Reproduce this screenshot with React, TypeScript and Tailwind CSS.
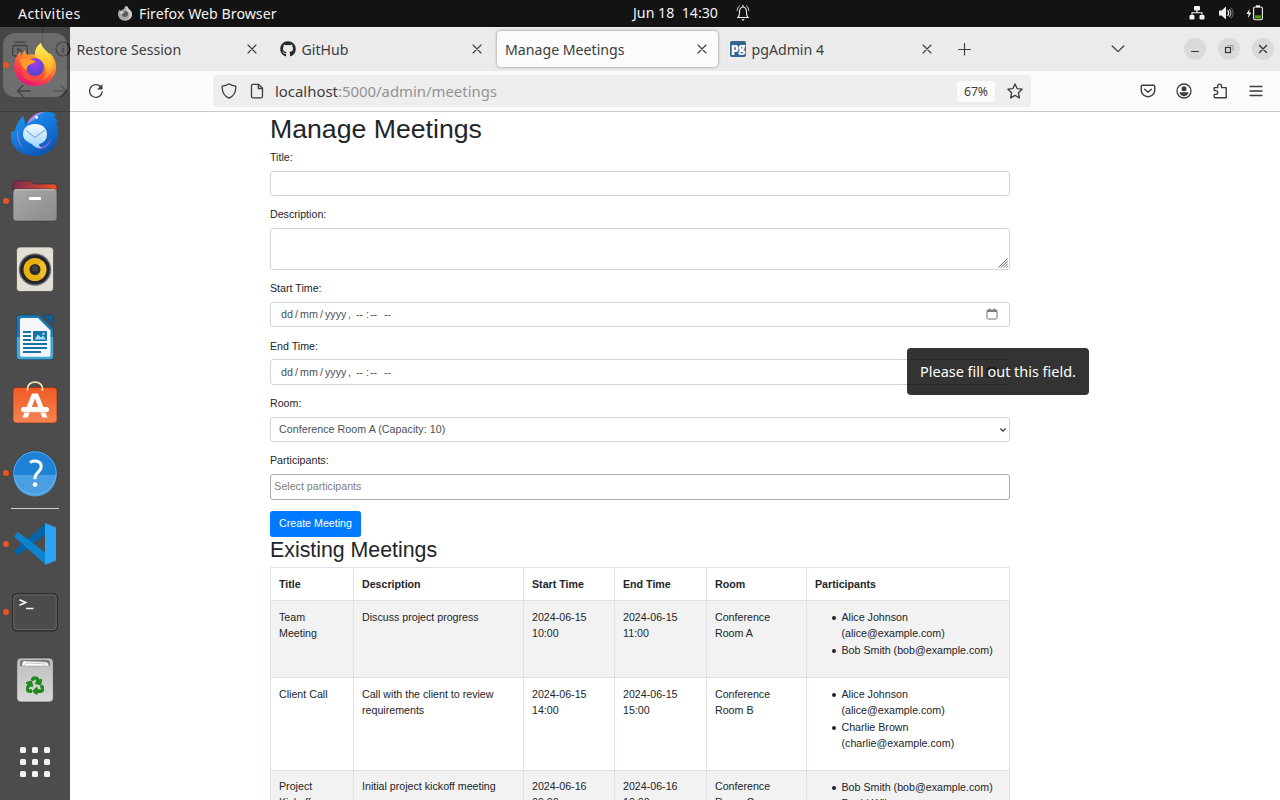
import React from "react";
import { FaGithub, FaRecycle } from "react-icons/fa";

const ui = "font-['Noto_Sans',sans-serif]";

/* ---------- small line icons ---------- */

function Line({ d, size = 16, className = "", w = 1.3, fill = "none" }: { d: string; size?: number; className?: string; w?: number; fill?: string }) {
  return (
    <svg viewBox="0 0 16 16" width={size} height={size} fill={fill} stroke="currentColor" strokeWidth={w} strokeLinecap="round" strokeLinejoin="round" className={`block shrink-0 ${className}`}>
      <path d={d} />
    </svg>
  );
}

const CloseX = () => <Line size={16} w={1.1} d="M4 4l8 8M12 4l-8 8" />;

function Bell() {
  return (
    <svg viewBox="0 0 16 18" width="16" height="18" fill="none" stroke="#f2f2f2" strokeWidth="1.1" className="block">
      <path d="M3 13.5c1.2-1.3 1.5-2.5 1.5-5C4.500 5 5.700 3 8 3s3.500 2 3.500 5.500c0 2.500.3 3.700 1.500 5z" strokeLinejoin="round" />
      <path d="M2.500 13.500h11M8 1.300v1.500" strokeLinecap="round" />
      <path d="M6.300 15.300h3.400L8 17z" fill="#f2f2f2" stroke="none" />
      <path d="M4.500 1.800C3 3 2.300 4.500 2.200 6.500M11.500 1.800c1.500 1.200 2.200 2.700 2.300 4.700" strokeLinecap="round" strokeWidth=".9" />
    </svg>
  );
}

function Network() {
  return (
    <svg viewBox="0 0 16 14" width="16" height="14" fill="#f2f2f2" className="mb-px block">
      <rect x="5" y="0" width="6" height="4.500" rx="1" />
      <rect x="0.500" y="9" width="5" height="4.500" rx="1" />
      <rect x="10.500" y="9" width="5" height="4.500" rx="1" />
      <path d="M8 4v2.800M3 9V6.800h10V9" fill="none" stroke="#f2f2f2" strokeWidth="1.100" />
    </svg>
  );
}

function Volume() {
  return (
    <svg viewBox="0 0 16 16" width="16" height="16" fill="none" strokeLinecap="round" className="mb-px ml-px block">
      <path d="M1 5.500h2.600L8 1.500v13l-4.400-4H1z" fill="#f2f2f2" />
      <path d="M9.800 5.500c1 1.500 1 3.500 0 5" stroke="#f2f2f2" strokeWidth="1.200" />
      <path d="M11.600 4.300c1.600 2.300 1.600 5.100 0 7.400" stroke="#a8a8a8" strokeWidth="1.200" />
      <path d="M13.300 3c2.300 3 2.300 7 0 10" stroke="#6c6c6c" strokeWidth="1" />
    </svg>
  );
}

function Battery() {
  return (
    <svg viewBox="0 0 18 16" width="18" height="16" className="mb-[2px] mr-px block">
      <path d="M3.600 4L.4 9h2.200L2 13l3.300-5.400H3.200z" fill="#f2f2f2" />
      <rect x="10" y="0.300" width="4" height="2" fill="#f2f2f2" />
      <rect x="7.600" y="2" width="8.800" height="12.800" rx="1.500" fill="none" stroke="#f2f2f2" strokeWidth="1.100" />
      <rect x="9" y="10.300" width="6" height="3.200" fill="#4e9a06" />
    </svg>
  );
}

function GreyFox() {
  return (
    <svg viewBox="0 0 48 48" width="16" height="16" className="mb-[2px] block">
      <path d="M25 3c5 2 6 6 9 9 7 3 11 9 11 16 0 11-9 19-21 19S3 38 3 27c0-6 2-9 5-13 1 2 2 3 5 3 2-3 5-4 8-4 1-4 2-7 4-10z" fill="#a9a9a9" />
      <path d="M28 3c5 2 6 6 8 10 6 3 9 9 9 15 0 11-9 19-21 19 10-3 15-9 14-20-2-5-8-6-10-12-1-5-1-8 0-12z" fill="#cfcfcf" />
      <circle cx="24" cy="27" r="9" fill="#5b5b5b" />
      <path d="M8 20c6-3 10 0 16 1-3 3-7 2-8 6-4 0-8-3-8-7z" fill="#d0d0d0" />
    </svg>
  );
}

/* ---------- top bar ---------- */

function TopBar() {
  return (
    <header className="relative flex h-[27px] shrink-0 items-center bg-[#131313] text-[14.200px] leading-none text-[#f2f2f2]">
      <span className="ml-[18px] w-[99px] pt-[2px] tracking-[0.350px]">Activities</span>
      <GreyFox />
      <span className="ml-[6px] whitespace-nowrap pt-[2px] tracking-[0.020px]">Firefox Web Browser</span>
      <div className="absolute left-[633px] top-0 flex h-[26px] items-center">
        <span className="w-[102px] whitespace-pre pt-px">{"Jun 18  14:30"}</span>
        <Bell />
      </div>
      <div className="ml-auto mr-[15px] flex items-center gap-[12px]">
        <Network />
        <Volume />
        <Battery />
      </div>
    </header>
  );
}

/* ---------- browser chrome ---------- */

function Tab({ icon, label, active = false }: { icon?: React.ReactNode; label: string; active?: boolean }) {
  return (
    <div className={`mx-[2px] flex h-[36px] w-[221px] shrink-0 items-center rounded-[4px] pl-[8px] pr-[8px] text-[#3d3d3d] ${active ? "bg-[#fbfbfb] shadow-[0_0_3px_rgba(0,0,0,0.45)]" : ""}`}>
      {icon && <span className="mr-[5.500px] flex size-4 items-center">{icon}</span>}
      <span className="flex-1 whitespace-nowrap pt-[3px] text-[14.150px] leading-none">{label}</span>
      <CloseX />
    </div>
  );
}

function WindowButton({ children }: { children: React.ReactNode }) {
  return <span className="flex size-[22px] items-center justify-center rounded-full bg-[#dadada] text-[#333]">{children}</span>;
}

function TabStrip() {
  return (
    <div className="flex h-[44px] shrink-0 items-center bg-[#ebebeb] text-[#3d3d3d]">
      <div className="flex h-full w-[43px] items-center border-r border-[#b5b5b5] pl-[12px]">
        <svg viewBox="0 0 16 16" width="16" height="16" fill="none" stroke="currentColor" strokeWidth="1.300" strokeLinejoin="round">
          <rect x="0.700" y="4.500" width="14.600" height="10.500" rx="2" />
          <path d="M2.500 1.200h11M6 7.500v4.500l4-2.200z" />
        </svg>
      </div>
      <div className="ml-[2px] flex">
        <Tab
          label="Restore Session"
          icon={
            <svg viewBox="0 0 16 16" width="16" height="16" fill="none" stroke="currentColor" strokeWidth="1.200">
              <circle cx="8" cy="8" r="7" />
              <path d="M8 7v5M8 4v1.600" />
            </svg>
          }
        />
        <Tab label="GitHub" icon={<FaGithub className="size-4 text-[#24292f]" />} />
        <Tab label="Manage Meetings" active />
        <Tab
          label="pgAdmin 4"
          icon={<span className="flex size-4 items-center justify-center rounded-[2px] bg-[#326690] pb-[3px] font-['Open_Sans',sans-serif] text-[12px] font-extrabold leading-none tracking-[-0.600px] text-white">pg</span>}
        />
      </div>
      <Line className="ml-[12px]" w={1.2} d="M7.500 2.500v11.500M1.700 8.500h11.600" />
      <Line className="ml-auto" w={1.300} d="M2.200 5l5.800 5.600L13.800 5" />
      <div className="ml-[58px] mr-[6px] flex gap-[12px]">
        <WindowButton>
          <Line size={16} w={1.1} d="M4.500 10.500h7" />
        </WindowButton>
        <WindowButton>
          <svg viewBox="0 0 16 16" width="16" height="16" fill="none" className="block">
            <path d="M6.500 4.500h5.500v5.500" stroke="#999" />
            <rect x="4.500" y="6.500" width="5" height="5" stroke="#333" strokeWidth="1.200" />
          </svg>
        </WindowButton>
        <WindowButton>
          <Line size={16} w={1.400} d="M4.500 4.500l7 7M11.500 4.500l-7 7" />
        </WindowButton>
      </div>
    </div>
  );
}

function Toolbar() {
  return (
    <div className="flex h-[41px] shrink-0 items-center border-b border-[#c9c9c9] bg-[#fbfbfb] text-[#3d3d3d]">
      <Line className="ml-[16px]" d="M1.500 8h13M7 2.500L1.500 8 7 13.500" />
      <Line className="ml-[20px] opacity-50" d="M1.500 8h13M9 2.500L14.500 8 9 13.500" />
      <svg viewBox="0 0 16 16" width="16" height="16" fill="none" stroke="currentColor" strokeWidth="1.300" className="ml-[20px] block">
        <path d="M12.700 3.700A6.400 6.400 0 1 0 14.300 8.600" strokeLinecap="round" />
        <path d="M14.500 1v5.500H9z" fill="currentColor" stroke="none" />
      </svg>
      <div className="ml-[109px] flex h-[32px] w-[818px] items-center rounded-[4px] bg-[#eee] pl-[8px] pr-[8px]">
        <Line d="M8 .8c1.800 1.400 4 2.200 6.800 2.300.3 5-1.800 9.800-6.800 12.100C3 12.900.9 8.100 1.200 3.100 4 3 6.200 2.200 8 .8z" />
        <Line className="ml-[12px]" d="M2.500 2.800c0-.9.500-1.500 1.400-1.500H9.500l4 4v8c0 .9-.5 1.500-1.400 1.500H3.900c-.9 0-1.400-.6-1.400-1.500zM9.300 1.500v4h4" />
        <span className="ml-[10px] flex-1 whitespace-nowrap pt-px text-[14.900px] leading-none text-[#939393]">
          <span className="text-[#3d3d3d]">localhost</span>:5000/admin/meetings
        </span>
        <span className="mr-[12px] flex h-[21px] w-[38px] items-center justify-center rounded-[3px] bg-[#fbfbfb] pt-[2px] text-[12.300px] leading-none tracking-[-0.100px]">67%</span>
        <Line d="M8 .9l2.100 4.700 5 .6-3.700 3.500 1 5.200L8 12.400l-4.400 2.500 1-5.200L.9 6.200l5-.6z" />
      </div>
      <Line className="ml-[109px]" w={1.400} d="M2.800 2.300h10.400c.9 0 1.600.6 1.600 1.500v3.300c0 3.900-3 6.600-6.800 6.600S1.200 11 1.200 7.100V3.800c0-.9.700-1.500 1.600-1.500zM4.700 6.300L8 9.300l3.300-3" />
      <svg viewBox="0 0 16 16" width="16" height="16" className="ml-[20px] block" fill="currentColor">
        <circle cx="8" cy="8" r="7" fill="none" stroke="currentColor" strokeWidth="1.300" />
        <circle cx="8" cy="5.800" r="2.500" />
        <path d="M3.600 9.300h8.800c0 2.300-2 3.900-4.400 3.900S3.600 11.600 3.600 9.300z" />
      </svg>
      <Line className="ml-[20px]" w={1.400} d="M2.200 4.600h3.500V3a1.900 1.900 0 0 1 3.800 0v1.600h4.700v10.200H3.100c-.5 0-.9-.3-.9-.8v-2.600h1.600a1.900 1.900 0 0 0 0-3.800H2.200z" />
      <Line className="ml-[20px]" w={1.300} d="M2 3.500h12M2 8h12M2 12.500h12" />
    </div>
  );
}

/* ---------- page ---------- */

const field = "w-full rounded-[3px] border border-[#ced4da] bg-white text-[#495057]";

function Group({ label, className = "mb-[10px] gap-[6px]", children }: { label: string; className?: string; children: React.ReactNode }) {
  return (
    <div className={`flex flex-col ${className}`}>
      <label className="block leading-4">{label}</label>
      {children}
    </div>
  );
}

function DateTime({ className }: { className: string }) {
  return (
    <div className={`${field} flex items-center pl-[10px] pr-[11px] ${className}`}>
      <span className="w-[14px]">dd</span>
      <span className="w-[5px]">/</span>
      <span className="w-[20px]">mm</span>
      <span className="w-[5px]">/</span>
      <span className="w-[23px]">yyyy</span>
      <span className="w-[8px]">,</span>
      <span className="w-[9px]">--</span>
      <span className="w-[5px] text-center">:</span>
      <span className="w-[14px]">--</span>
      <span>--</span>
      <svg viewBox="0 0 12 12" width="12" height="12" className="ml-auto block" fill="none" stroke="#6c757d">
        <rect x="1" y="2" width="10" height="9" rx="1.300" />
        <path d="M1 3h10" strokeWidth="1.800" />
        <path d="M3.500.3V2M8.500.3V2" />
      </svg>
    </div>
  );
}

const rows = [
  { title: "Team Meeting", desc: "Discuss project progress", start: "2024-06-15 10:00", end: "2024-06-15 11:00", room: "Conference Room A", people: ["Alice Johnson (alice@example.com)", "Bob Smith (bob@example.com)"], row: "h-[77px] bg-[#f2f2f2]", pad: "pt-[8px]", list: "", item: "pb-[0.670px]" },
  { title: "Client Call", desc: "Call with the client to review requirements", start: "2024-06-15 14:00", end: "2024-06-15 15:00", room: "Conference Room B", people: ["Alice Johnson (alice@example.com)", "Charlie Brown (charlie@example.com)"], row: "h-[93px]", pad: "pt-[8px]", list: "", item: "pb-[0.670px]" },
  { title: "Project Kickoff", desc: "Initial project kickoff meeting", start: "2024-06-16 09:00", end: "2024-06-16 10:00", room: "Conference Room C", people: ["Bob Smith (bob@example.com)", "David Wilson (david@example.com)"], row: "h-[93px] bg-[#f2f2f2]", pad: "pt-[7px]", list: "pt-px", item: "" },
];

const cell = "border border-[#dee2e6] px-[8px] pb-[8px] text-left align-top";

function Page() {
  return (
    <main className="mx-auto w-[740px] shrink-0 font-['Liberation_Sans',Arial,sans-serif] text-[10.667px] leading-4 text-[#212529]">
      <h1 className="mb-[3px] text-[26.667px] leading-[34px]">Manage Meetings</h1>
      <Group label="Title:">
        <div className={`${field} h-[25px]`} />
      </Group>
      <Group label="Description:">
        <div className={`${field} flex h-[42px] items-end justify-end`}>
          <svg viewBox="0 0 10 10" width="10" height="10" className="mb-px mr-px block" stroke="#444" strokeWidth=".8">
            <path d="M.3 9.700l9.400-9.400M3 9.700L9.700 3M5.700 9.700l4-4M8.300 9.700l1.400-1.400" />
          </svg>
        </div>
      </Group>
      <Group label="Start Time:" className="mb-[11px] gap-[6px]">
        <DateTime className="h-[25px] pb-px" />
      </Group>
      <Group label="End Time:" className="mb-[10px] gap-[5px]">
        <DateTime className="h-[26px]" />
      </Group>
      <Group label="Room:">
        <div className={`${field} flex h-[25px] items-center justify-between pl-[8px] pr-[3px]`}>
          <span className="pb-[2px] tracking-[0.050px]">Conference Room A (Capacity: 10)</span>
          <svg viewBox="0 0 6 4" width="6" height="4" fill="none" stroke="#333" strokeWidth="1.100">
            <path d="M.4.500L3 3.200 5.600.500" />
          </svg>
        </div>
      </Group>
      <Group label="Participants:" className="mb-[11px] gap-[6px]">
        <div className="flex h-[26px] w-full items-center rounded-[3px] border border-[#aaa] bg-white pb-[2px] pl-[3.300px] text-[#7e7e7e]">Select participants</div>
      </Group>
      <div className="flex">
        <button className="h-[26px] w-[91px] rounded-[2.700px] bg-[#007bff] pb-[2px] text-center leading-4 text-white">Create Meeting</button>
      </div>
      <h2 className="mb-[3px] text-[21.333px] leading-[27px]">Existing Meetings</h2>
      <table className="w-[740px] table-fixed border-collapse">
        <colgroup>
          <col className="w-[83px]" />
          <col className="w-[170px]" />
          <col className="w-[91px]" />
          <col className="w-[92px]" />
          <col className="w-[100px]" />
          <col className="w-[203px]" />
        </colgroup>
        <thead>
          <tr className="h-[33px]">
            {["Title", "Description", "Start Time", "End Time", "Room", "Participants"].map((h) => (
              <th key={h} className={`${cell} pt-[8px] font-bold`}>{h}</th>
            ))}
          </tr>
        </thead>
        <tbody>
          {rows.map((r) => (
            <tr key={r.title} className={r.row}>
              {[r.title, r.desc, r.start, r.end, r.room].map((text, i) => (
                <td key={i} className={`${cell} ${r.pad}`}>{text}</td>
              ))}
              <td className={`${cell} ${r.pad}`}>
                <ul className={`pl-[16px] ${r.list}`}>
                  {r.people.map((p) => (
                    <li key={p} className={`flex ${r.item}`}>
                      <span className="mr-[5.500px] mt-[7px] ml-[1px] size-[4px] shrink-0 rounded-full bg-[#212529]" />
                      <span>{p}</span>
                    </li>
                  ))}
                </ul>
              </td>
            </tr>
          ))}
        </tbody>
      </table>
    </main>
  );
}

/* ---------- dock ---------- */

function Art({ children }: { children: React.ReactNode }) {
  return (
    <svg viewBox="0 0 48 48" width="48" height="48" className="block">
      {children}
    </svg>
  );
}

function Firefox() {
  return (
    <Art>
      <defs>
        <linearGradient id="ffBody" x1=".8" y1="0" x2=".3" y2="1">
          <stop offset="0" stopColor="#fff44f" />
          <stop offset=".35" stopColor="#ffa62b" />
          <stop offset=".65" stopColor="#ff4f3b" />
          <stop offset="1" stopColor="#e3127b" />
        </linearGradient>
        <linearGradient id="ffTail" x1=".5" y1="0" x2=".5" y2="1">
          <stop offset="0" stopColor="#fff25a" />
          <stop offset=".6" stopColor="#ffbd2e" />
          <stop offset="1" stopColor="#ff6a2b" />
        </linearGradient>
        <radialGradient id="ffGlobe" cx=".5" cy=".3" r=".7">
          <stop offset="0" stopColor="#a53de8" />
          <stop offset="1" stopColor="#4b45d6" />
        </radialGradient>
      </defs>
      <path d="M30 2c1 5 4 6 8 11l1-1c4 4 6 9 6 14 0 11-9 19-21 19S3 36 3 26c0-6 2-10 6-16l1 5 4-6c0 3 1 4 3 5 3-1 5-1 7 0 0-5 2-9 6-12z" fill="url(#ffBody)" />
      <path d="M30 2c1 5 4 6 8 11 4 5 5 12 2 18-2 5-6 8-11 9 6-4 7-10 5-15-2-4-10-6-10-12 0-5 2-8 6-11z" fill="url(#ffTail)" />
      <circle cx="24" cy="26" r="9" fill="url(#ffGlobe)" />
      <path d="M9 18c5-2 9 0 12 1 3 0 4 1 3 2-2 2-6 2-7 4-1 1-2 3-1 5-4-2-7-7-7-12z" fill="#ff9a28" />
      <path d="M14 30c3 6 14 8 20 1-2 9-14 11-20 6-3-3-4-7-3-11 1 2 2 3 3 4z" fill="#ff553d" opacity=".75" />
    </Art>
  );
}

function Thunderbird() {
  return (
    <Art>
      <defs>
        <linearGradient id="tbBody" x1="0" y1="0" x2=".6" y2="1">
          <stop offset="0" stopColor="#1c9cf2" />
          <stop offset=".6" stopColor="#1373d9" />
          <stop offset="1" stopColor="#0d57b0" />
        </linearGradient>
        <linearGradient id="tbMail" x1="0" y1="0" x2="0" y2="1">
          <stop offset="0" stopColor="#f4fbff" />
          <stop offset="1" stopColor="#9fd3ff" />
        </linearGradient>
      </defs>
      <path d="M0 22c2 1 3 1 4-1 1-5 3-8 8-14 2 3 2 7 2 10 4-8 10-13 19-14 5-1 10 0 13 4h-4c3 2 5 4 5 7l-2-1c3 7 3 14 0 21-4 8-11 13-21 13C10 47 0 38 0 29c0-3 0-5 0-7z" fill="url(#tbBody)" />
      <path d="M16 15c4-8 9-12 18-12-5 2-9 4-11 8z" fill="#a48bf0" />
      <path d="M7 19c-3 8 0 16 6 21-5-6-6-13-6-21z" fill="#8279e8" />
      <path d="M24 38c7 1 13-2 16-9 0 7-6 12-13 11z" fill="#7064dc" />
      <path d="M24 15c7 0 12 4 12 10.500 0 5-3 8.500-8 9.500 0 2 1 3 3 4-5 0-8-1-10-4-5-2-9-5-9-9.500C12 19 17 15 24 15z" fill="url(#tbMail)" />
      <path d="M15 21.500l9 7 10-7.500" fill="none" stroke="#86b4e0" strokeWidth="1.100" />
      <circle cx="25.500" cy="8.300" r="1.500" fill="#fff" />
    </Art>
  );
}

function Files() {
  return (
    <Art>
      <defs>
        <linearGradient id="flBack"><stop offset="0" stopColor="#7c2a55" /><stop offset="1" stopColor="#e95420" /></linearGradient>
        <linearGradient id="flFront" x1="0" y1="0" x2="1" y2="1"><stop offset="0" stopColor="#a9a9a9" /><stop offset="1" stopColor="#8b8b8b" /></linearGradient>
      </defs>
      <path d="M2 20V7c0-2 1-3 3-3h14l4 3h20c2 0 3 1 3 3v10z" fill="url(#flBack)" stroke="#402030" strokeWidth=".6" />
      <rect x="2" y="12" width="44" height="32" rx="3" fill="url(#flFront)" stroke="#444" strokeWidth=".6" />
      <path d="M4 12.800h40" stroke="#c8c8c8" />
      <rect x="18" y="20" width="12" height="3" rx="1" fill="#fff" />
    </Art>
  );
}

function Rhythmbox() {
  return (
    <Art>
      <rect x="5.500" y="2" width="37" height="44.500" rx="3.500" fill="#e3dfd4" stroke="#39352e" strokeWidth=".6" />
      <circle cx="24" cy="24.500" r="16.200" fill="#6b6b70" />
      <circle cx="24" cy="24.500" r="14.800" fill="#24242e" />
      <circle cx="24" cy="24.500" r="11.500" fill="#e8b010" />
      <path d="M24 24.500l7-9a11.500 11.500 0 0 1 0 18z" fill="#f5c93d" opacity=".6" />
      <circle cx="24" cy="24.500" r="5.500" fill="#2c2c2c" />
      <circle cx="24" cy="23.500" r="3" fill="#444" />
    </Art>
  );
}

function Writer() {
  return (
    <Art>
      <path d="M9 2h19l14.500 14V43c0 2-1 3.500-3.500 3.500H9c-2 0-3.500-1.500-3.500-3.500V5.500C5.500 3.500 7 2 9 2z" fill="#1b7bb5" stroke="#15425f" strokeWidth=".6" />
      <path d="M5.800 24h36.500v19c0 2-1 3.300-3.300 3.300H9c-2 0-3.200-1.300-3.200-3.300z" fill="#41a7d8" />
      <path d="M11 5h16l12.500 12.500V42c0 1-.7 1.700-1.700 1.700H11c-1.300 0-2-.7-2-1.700V7c0-1.300.7-2 2-2z" fill="#f4f6f7" />
      <path d="M32 2h8c1.700 0 2.500 1 2.500 2.500V12z" fill="#12608f" stroke="#15425f" strokeWidth=".6" />
      <path d="M12 19h8M12 23h8M12 27h8M12 31h24M12 35h24M12 39h18" stroke="#1673a5" strokeWidth="2" />
      <rect x="22" y="18" width="14" height="10" rx="1" fill="#1673a5" />
      <path d="M23.500 26.500l3.500-5 3 3 2-2 3 4z" fill="#a6dcf5" />
      <circle cx="32.500" cy="20.700" r="1.200" fill="#a6dcf5" />
    </Art>
  );
}

function Software() {
  return (
    <Art>
      <defs><linearGradient id="swBag" x1="0" y1="0" x2="0" y2="1"><stop offset="0" stopColor="#f15a22" /><stop offset="1" stopColor="#f58453" /></linearGradient></defs>
      <rect x="2" y="6.500" width="44" height="35.500" rx="3.500" fill="url(#swBag)" stroke="#7c2b11" strokeWidth=".6" />
      <path d="M16.500 9V7.500c0-8.500 15-8.500 15 0V9" fill="none" stroke="#f7ddb0" strokeWidth="1.800" strokeLinecap="round" />
      <path d="M11.500 36.500L21 12.500h6l9.500 24h-5.300L24 17.500l-7.200 19z" fill="#fff" />
      <rect x="10" y="26" width="28" height="5" rx="2.500" fill="#fff" />
      <path d="M12 31.300h24" stroke="#f3a284" strokeWidth=".8" />
    </Art>
  );
}

function Help() {
  return (
    <Art>
      <circle cx="24" cy="24" r="22" fill="#1f82d6" stroke="#173c5f" strokeWidth=".7" />
      <path d="M2.500 26h43a21.500 21.500 0 0 1-43 0z" fill="#4a9fe2" />
      <circle cx="24" cy="24" r="21.300" fill="none" stroke="#7fbcee" strokeWidth=".7" />
      <path d="M19 13.500c3.500-2.500 11.200-2 11.200 4 0 5.700-6.200 5.700-6.200 11.700v1" fill="none" stroke="#fff" strokeWidth="3" />
      <circle cx="24" cy="35.600" r="2.300" fill="#fff" />
    </Art>
  );
}

function Code() {
  return (
    <Art>
      <path d="M3 31l4 4.500L35 14V3z" fill="#0065a9" />
      <path d="M3 16.500l4-4.500L35 33v12z" fill="#0b83cf" />
      <path d="M34 3l11 4.500v33L34 45z" fill="#2aa4f4" />
    </Art>
  );
}

function Terminal() {
  return (
    <Art>
      <rect x="1.700" y="5.800" width="44.600" height="37" rx="4" fill="#454545" stroke="#292929" strokeWidth="1.200" />
      <rect x="2.800" y="6.900" width="42.400" height="34.600" rx="3.200" fill="#4b4b4b" stroke="#707070" strokeWidth=".8" />
      <path d="M8.500 11.800l6 2.700-6 2.700M15 20.500h7.500" fill="none" stroke="#f4f4f4" strokeWidth="1.700" />
    </Art>
  );
}

function Trash() {
  return (
    <Art>
      <defs><linearGradient id="trBin" x1="0" y1="0" x2="0" y2="1"><stop offset="0" stopColor="#bdbdbd" /><stop offset="1" stopColor="#d9d9d9" /></linearGradient></defs>
      <rect x="5.800" y="2" width="36.500" height="44" rx="4" fill="url(#trBin)" stroke="#333" strokeWidth=".6" />
      <path d="M9 10V7c0-2 1-3 3-3h24c2 0 3 1 3 3v3z" fill="#777" />
      <path d="M11 10c0-4 1-5 3-5l21 1c2 1 3 2 3 4z" fill="#fff" stroke="#999" strokeWidth=".6" />
      <path d="M13 10c1-3 2-3 4-3l18 1" fill="none" stroke="#aaa" strokeWidth=".7" />
      <FaRecycle x="15" y="20.500" size={18} color="#1f8a1f" stroke="#1f8a1f" strokeWidth={36} />
    </Art>
  );
}

function DockItem({ running = false, selected = false, children }: { running?: boolean; selected?: boolean; children: React.ReactNode }) {
  return (
    <div className={`relative mb-[4px] flex size-[64px] shrink-0 items-center justify-center rounded-[12px] ${selected ? "bg-white/20" : ""}`}>
      {running && <span className="absolute left-0 top-[29px] size-[6px] rounded-full bg-[#e95420]" />}
      {children}
    </div>
  );
}

function Dock() {
  return (
    <aside className="absolute bottom-0 left-0 top-[27px] flex w-[70px] flex-col bg-black/70 pb-[2px] pl-[3px] pt-[6px]">
      <DockItem running selected><Firefox /></DockItem>
      <DockItem><Thunderbird /></DockItem>
      <DockItem running><Files /></DockItem>
      <DockItem><Rhythmbox /></DockItem>
      <DockItem><Writer /></DockItem>
      <DockItem><Software /></DockItem>
      <DockItem running><Help /></DockItem>
      <div className="-mt-px mb-[3px] ml-[8px] h-px w-[48px] shrink-0 bg-[#cfcfcf]" />
      <DockItem running><Code /></DockItem>
      <DockItem running><Terminal /></DockItem>
      <DockItem><Trash /></DockItem>
      <div className="mt-auto">
        <DockItem>
          <div className="grid grid-cols-3 gap-[6px]">
            {Array.from({ length: 9 }, (_, i) => (
              <span key={i} className="size-[6px] rounded-[1.500px] bg-[#f2f2f2]" />
            ))}
          </div>
        </DockItem>
      </div>
    </aside>
  );
}

export default function App() {
  return (
    <div className={`relative flex h-[800px] w-[1280px] flex-col overflow-hidden bg-white ${ui}`}>
      <TopBar />
      <TabStrip />
      <Toolbar />
      <Page />
      <Dock />
      <div className="absolute left-[907px] top-[348px] flex h-[47px] w-[182px] items-center justify-center rounded-[4px] bg-black/80 pt-[2px] text-[14.450px] leading-none text-white">
        Please fill out this field.
      </div>
    </div>
  );
}
